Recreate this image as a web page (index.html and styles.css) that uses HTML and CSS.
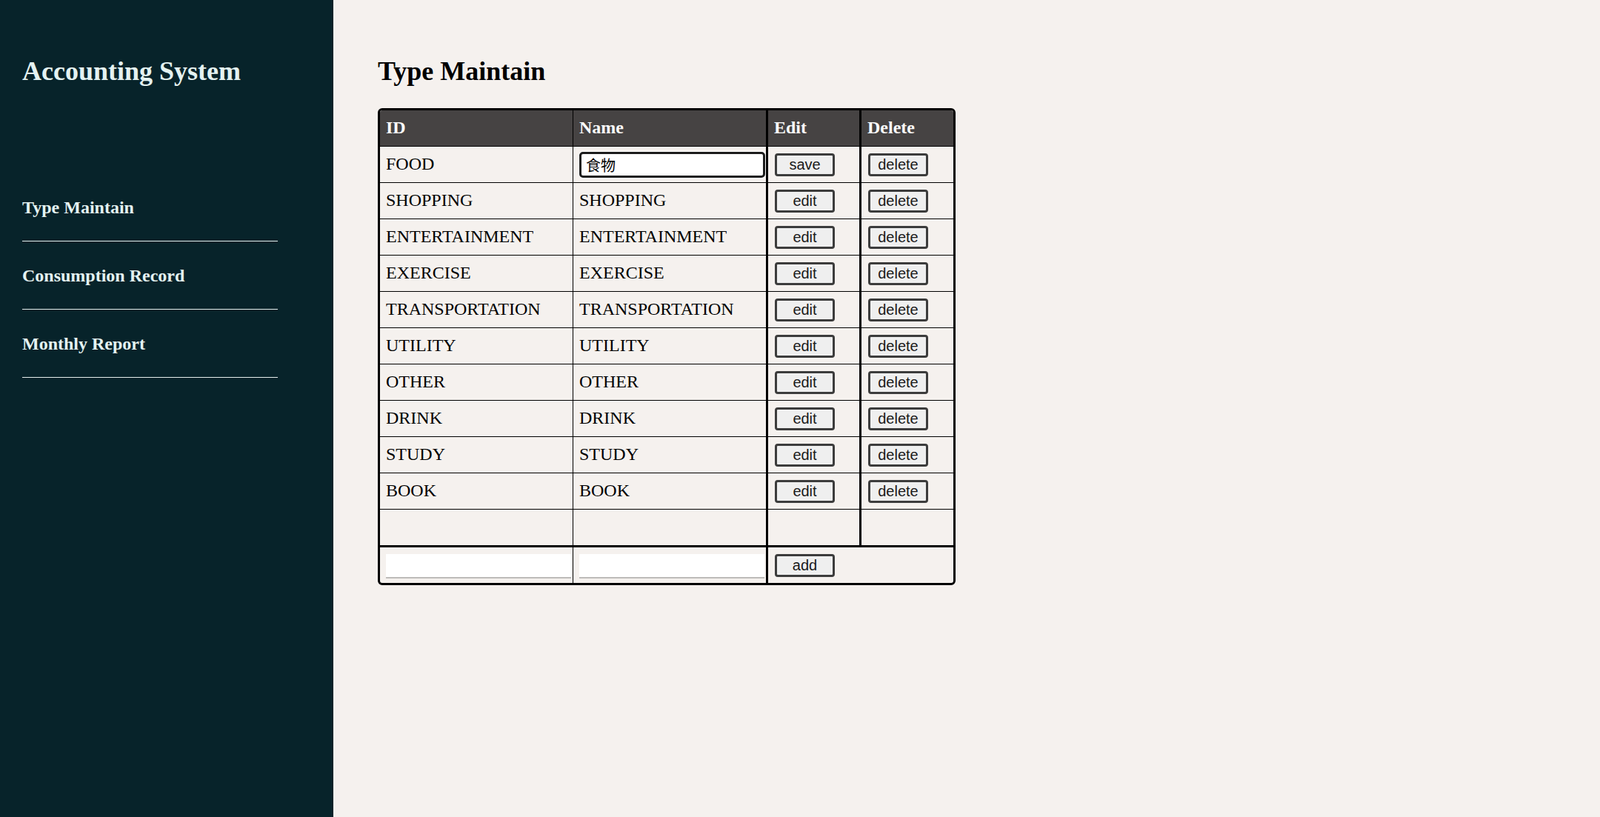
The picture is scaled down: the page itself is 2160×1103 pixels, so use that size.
FILE: index.html
```html
<!DOCTYPE html>
<html lang="en">
<head>
<meta charset="utf-8">
<title>Accounting System</title>
<link rel="stylesheet" href="styles.css">
</head>
<body>
<div class="app">
  <aside class="sidebar">
    <h2 class="brand">Accounting System</h2>
    <nav class="nav">
      <a class="nav-item" href="#">Type Maintain</a>
      <a class="nav-item" href="#">Consumption Record</a>
      <a class="nav-item" href="#">Monthly Report</a>
    </nav>
  </aside>
  <main class="content">
    <h2 class="page-title">Type Maintain</h2>
    <div class="table-wrap">
      <table class="type-table">
        <colgroup>
          <col class="c-id">
          <col class="c-name">
          <col class="c-edit">
          <col class="c-del">
        </colgroup>
        <thead>
          <tr><th>ID</th><th class="sep">Name</th><th class="sep thick">Edit</th><th class="sep thick">Delete</th></tr>
        </thead>
        <tbody>
          <tr><td>FOOD</td><td class="sep"><input class="field focused" value="食物"></td><td class="sep thick"><button class="btn">save</button></td><td class="sep thick"><button class="btn">delete</button></td></tr>
          <tr><td>SHOPPING</td><td class="sep">SHOPPING</td><td class="sep thick"><button class="btn">edit</button></td><td class="sep thick"><button class="btn">delete</button></td></tr>
          <tr><td>ENTERTAINMENT</td><td class="sep">ENTERTAINMENT</td><td class="sep thick"><button class="btn">edit</button></td><td class="sep thick"><button class="btn">delete</button></td></tr>
          <tr><td>EXERCISE</td><td class="sep">EXERCISE</td><td class="sep thick"><button class="btn">edit</button></td><td class="sep thick"><button class="btn">delete</button></td></tr>
          <tr><td>TRANSPORTATION</td><td class="sep">TRANSPORTATION</td><td class="sep thick"><button class="btn">edit</button></td><td class="sep thick"><button class="btn">delete</button></td></tr>
          <tr><td>UTILITY</td><td class="sep">UTILITY</td><td class="sep thick"><button class="btn">edit</button></td><td class="sep thick"><button class="btn">delete</button></td></tr>
          <tr><td>OTHER</td><td class="sep">OTHER</td><td class="sep thick"><button class="btn">edit</button></td><td class="sep thick"><button class="btn">delete</button></td></tr>
          <tr><td>DRINK</td><td class="sep">DRINK</td><td class="sep thick"><button class="btn">edit</button></td><td class="sep thick"><button class="btn">delete</button></td></tr>
          <tr><td>STUDY</td><td class="sep">STUDY</td><td class="sep thick"><button class="btn">edit</button></td><td class="sep thick"><button class="btn">delete</button></td></tr>
          <tr><td>BOOK</td><td class="sep">BOOK</td><td class="sep thick"><button class="btn">edit</button></td><td class="sep thick"><button class="btn">delete</button></td></tr>
          <tr class="empty-row"><td></td><td class="sep"></td><td class="sep thick"></td><td class="sep thick"></td></tr>
        </tbody>
        <tfoot>
          <tr><td><input class="field plain"></td><td class="sep"><input class="field plain"></td><td class="sep thick" colspan="2"><button class="btn">add</button></td></tr>
        </tfoot>
      </table>
    </div>
  </main>
</div>
</body>
</html>
```
FILE: styles.css
```css
html, body {
  margin: 0;
  padding: 0;
}

body {
  background: #f5f1ee;
  font-family: "Liberation Serif", "Times New Roman", serif;
  color: #000;
}

.app {
  display: flex;
  align-items: flex-start;
}

.sidebar {
  flex: 0 0 auto;
  width: 390px;
  height: 100vh;
  padding: 45px 30px 25px;
  background: #07232a;
  color: #e4f2f1;
}

.brand {
  margin: 30px 0 117px;
  font-size: 36px;
  line-height: 42px;
  font-weight: bold;
}

.nav {
  display: flex;
  flex-direction: column;
  width: 345px;
}

.nav-item {
  display: block;
  padding: 32px 0 31px;
  line-height: 28px;
  font-size: 24px;
  font-weight: bold;
  color: #e4f2f1;
  text-decoration: none;
  border-bottom: 1px solid #e8eeee;
}

.content {
  flex: 1 1 auto;
  padding: 45px 60px;
}

.page-title {
  margin: 30px 0 29px;
  font-size: 36px;
  line-height: 42px;
  font-weight: bold;
}

.table-wrap {
  display: inline-block;
  border: 3px solid #000;
  border-radius: 6px;
  overflow: hidden;
}

.type-table {
  border-collapse: separate;
  border-spacing: 0;
  table-layout: fixed;
  width: 774px;
  font-size: 24px;
}

.c-id { width: 260px; }
.c-name { width: 261px; }
.c-edit { width: 126px; }
.c-del { width: 127px; }

.type-table th {
  background: #464343;
  color: #fbfbfb;
  text-align: left;
  font-weight: bold;
  height: 46px;
  padding: 0 0 2px 8px;
  border-bottom: 1px solid #000;
}

.type-table td {
  height: 46px;
  padding: 0 0 2px 8px;
  border-bottom: 1px solid #000;
  vertical-align: middle;
  white-space: nowrap;
}

.type-table .sep {
  border-left: 1px solid #000;
}

.type-table .thick {
  border-left-width: 3px;
}

.type-table tbody tr.empty-row td {
  border-bottom: 0;
}

.type-table tfoot td {
  border-top: 3px solid #000;
  border-bottom: 0;
  height: 46px;
  padding: 1px 0 1px 8px;
}

.type-table td:has(.btn) {
  padding: 0 0 0 9px;
  height: 48px;
}

.type-table tfoot td:has(.btn) {
  height: 46px;
  padding: 1px 0 1px 9px;
}

.btn {
  display: block;
  box-sizing: border-box;
  width: 81px;
  height: 31px;
  padding: 0;
  margin: 1px 0 0;
  font-family: "Liberation Sans", Arial, sans-serif;
  font-size: 20px;
  color: #1a1a1a;
  background: #efefef;
  border: 3px solid #3c3c3c;
  border-radius: 4px;
}

.field {
  display: block;
  box-sizing: border-box;
  width: 250px;
  font-family: "Liberation Sans", "Noto Sans CJK TC", sans-serif;
  font-size: 20px;
  color: #000;
  background: #fff;
  outline: none;
}

.field.plain {
  height: 33px;
  border: 0;
  border-bottom: 2px solid #bdbbb9;
  padding: 0 8px;
  margin-top: 3px;
}

.field.focused {
  width: 251px;
  height: 35px;
  margin-top: 2px;
  padding: 0 0 0 6px;
  border: 3px solid #1c1c1c;
  border-radius: 5px;
  box-shadow: 0 0 0 1px #fff;
  font-family: "Noto Sans CJK TC", sans-serif;
}
```
